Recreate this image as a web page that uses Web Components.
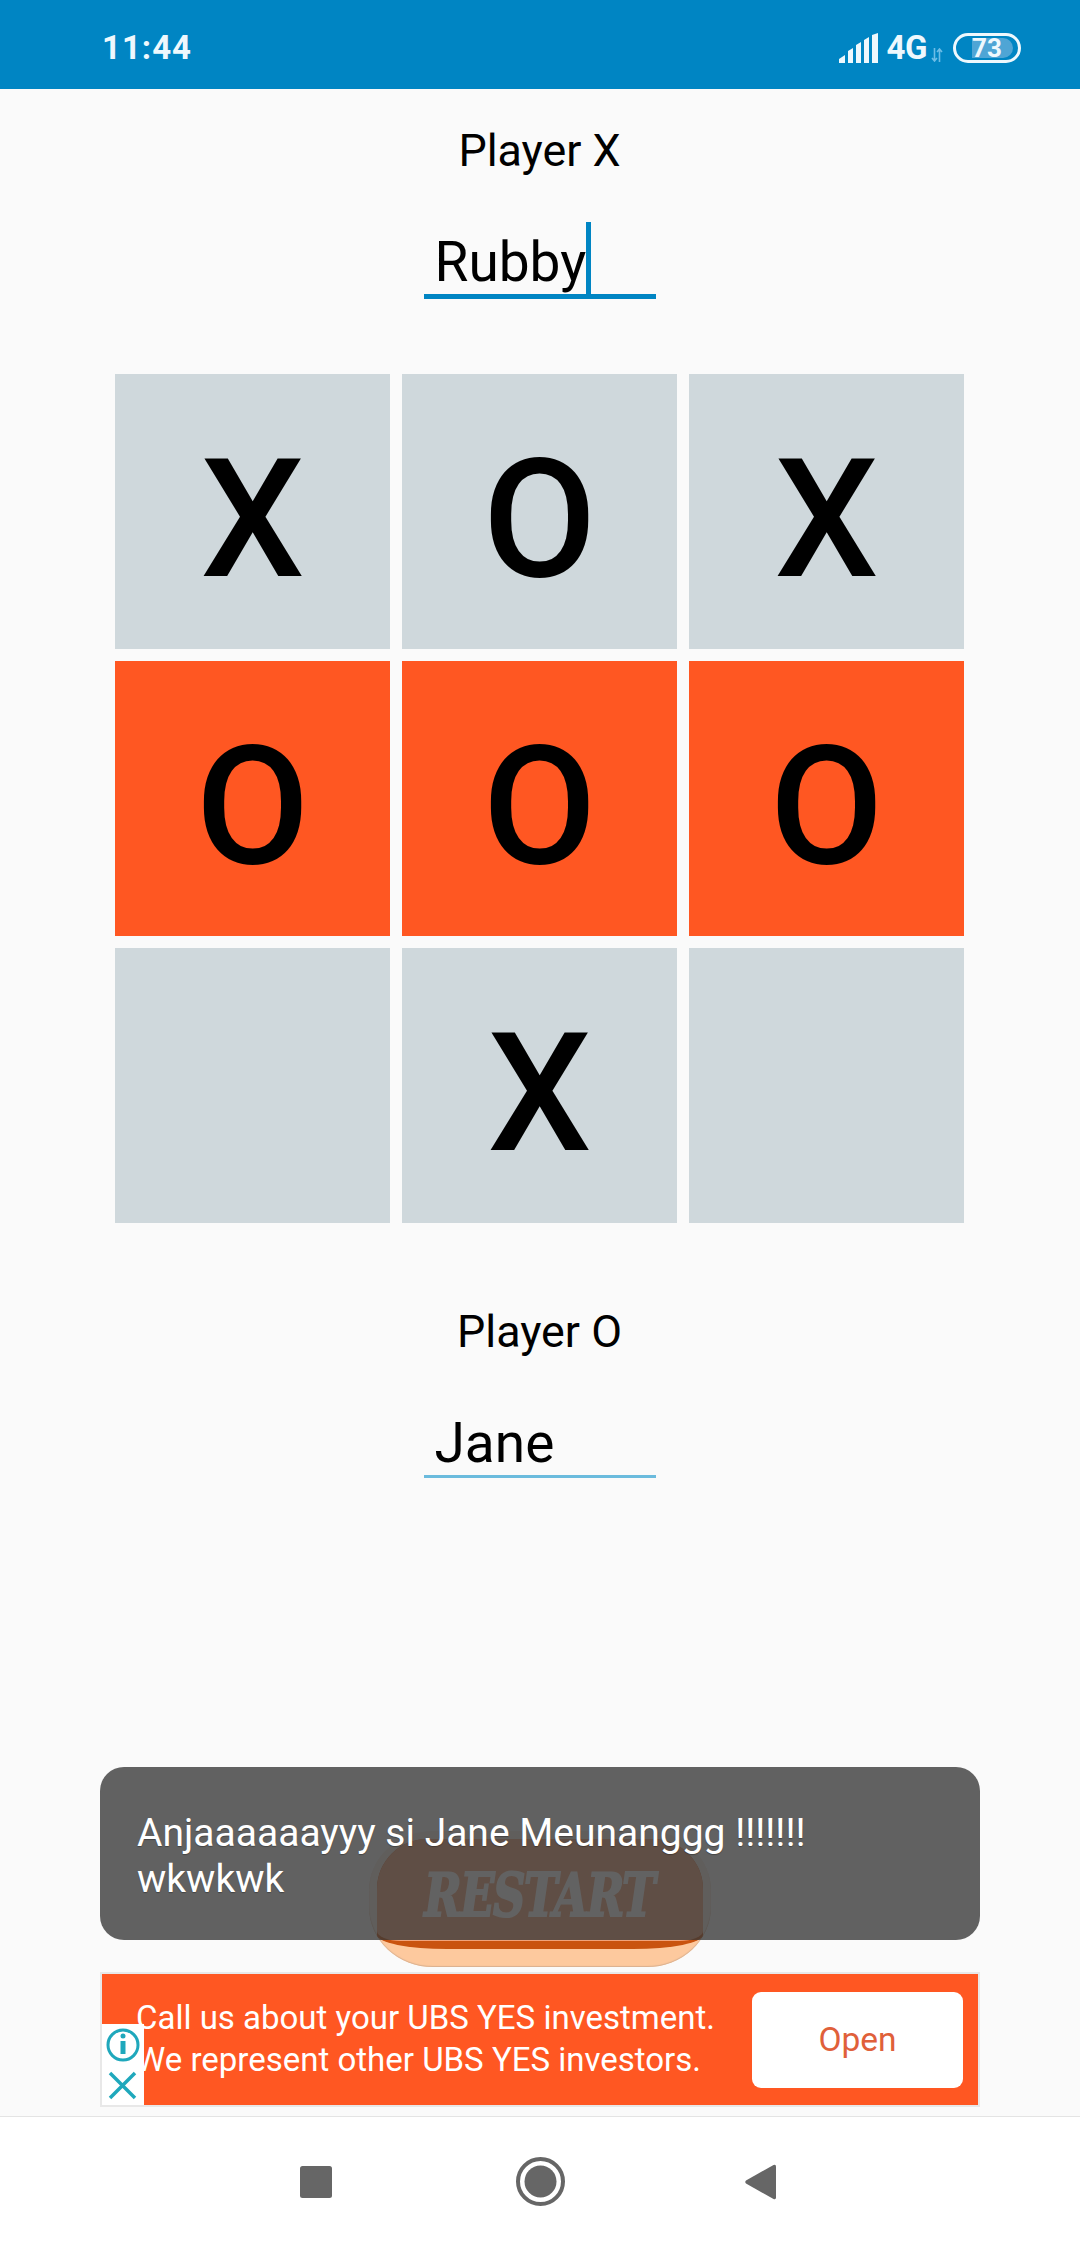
<!DOCTYPE html>
<html>
<head>
<meta charset="utf-8">
<title>Tic Tac Toe</title>
<style>
  html, body { margin: 0; padding: 0; }
  body { width: 1080px; height: 2246px; overflow: hidden; background: #fafafa; font-family: Roboto, sans-serif; }
  #app { display: flex; flex-direction: column; height: 2246px; position: relative; }
</style>
</head>
<body>
<div id="app">
  <status-bar time="11:44" level="73"></status-bar>
  <game-board></game-board>
  <ad-banner></ad-banner>
  <nav-bar></nav-bar>
  <toast-msg>Anjaaaaaayyy si Jane Meunanggg !!!!!!! wkwkwk</toast-msg>
</div>

<script>
/* === barra de estado === */
class StatusBar extends HTMLElement {
  constructor() {
    super();
    this.attachShadow({ mode: 'open' });
    const time = this.getAttribute('time');
    const level = this.getAttribute('level');
    this.shadowRoot.innerHTML = `
      <style>
        :host { display: flex; align-items: center; height: 89px; background: #0085c3; color: #fff; font-family: Roboto, sans-serif; flex: none; padding: 6px 59px 0 102px; box-sizing: border-box; }
        .time { font-size: 33px; font-weight: 700; letter-spacing: 1px; flex: 1; color: #eef8fd; }
        svg { display: block; }
        .arrows { margin-top: 15px; }
        .net { font-size: 33px; font-weight: 700; margin: 0 4px 0 8px; letter-spacing: -.5px; color: #eef8fd; }
        .bat { position: relative; width: 68px; height: 30px; margin-left: 10px; box-sizing: border-box; border: 3.5px solid #eef8fd; border-radius: 15px; }
        .fill { position: absolute; left: 16px; top: 2px; bottom: 2px; width: 41px; background: #4fa5d5; border-radius: 0 10px 10px 0; }
        .pct { position: absolute; left: 0; right: 0; top: -3px; text-align: center; font-size: 26px; line-height: 30px; font-weight: 700; color: #eef8fd; }
      </style>
      <span class="time">${time}</span>
      <svg width="40" height="30" viewBox="0 0 40 30" fill="#eef8fd">
        <path d="M0 30v-4l6-4v8zM9 30V18l5-3v15zM17 30V12l5-3v21zM25 30V7l5-3v26zM33 30V2l6-2v30z"/>
      </svg>
      <span class="net">4G</span>
      <svg class="arrows" width="12" height="14" viewBox="0 0 12 14" fill="none" stroke="#6dbde6" stroke-width="1.6">
        <path d="M3.5 0v13M1 10l2.500 3 2.500-3M8.500 14V1M6 4l2.500-3 2.500 3"/>
      </svg>
      <div class="bat"><div class="fill"></div><div class="pct">${level}</div></div>
    `;
  }
}

/* === casilla del tablero === */
class GameCell extends HTMLElement {
  constructor() {
    super();
    this.attachShadow({ mode: 'open' });
    this.shadowRoot.innerHTML = `
      <style>
        :host { display: flex; align-items: center; justify-content: center; width: 275px; height: 275px; background: #cfd8dc; font-family: Roboto, sans-serif; font-size: 165px; font-weight: 500; color: #000; line-height: 1; padding-top: 16px; box-sizing: border-box; }
        :host([win]) { background: #ff5722; }
      </style>
      <slot></slot>
    `;
  }
}

/* === campo de nombre === */
class PlayerField extends HTMLElement {
  constructor() {
    super();
    this.attachShadow({ mode: 'open' });
    this.shadowRoot.innerHTML = `
      <style>
        :host { display: flex; flex-direction: column; align-items: center; font-family: Roboto, sans-serif; color: #000; }
        .label { font-size: 44.800px; line-height: 52px; }
        .input { position: relative; box-sizing: border-box; width: 232px; height: 81px; margin-top: 39px; padding: 13px 0 0 11px; font-size: 55px; line-height: 66px; border-bottom: 3px solid #6bbbdd; }
        :host([focused]) .input { height: 83px; border-bottom: 5px solid #0085c3; }
        .caret { display: none; position: absolute; left: 162px; top: 6px; bottom: 0; width: 5px; background: #0085c3; }
        :host([focused]) .caret { display: block; }
      </style>
      <div class="label"><slot name="label"></slot></div>
      <div class="input"><slot></slot><span class="caret"></span></div>
    `;
  }
}

/* === pantalla de juego === */
class GameBoard extends HTMLElement {
  constructor() {
    super();
    this.attachShadow({ mode: 'open' });
    const marks = ['X', 'O', 'X', 'O', 'O', 'O', '', 'X', ''];
    const cells = marks.map((m, i) => `<game-cell ${i >= 3 && i <= 5 ? 'win' : ''}>${m}</game-cell>`).join('');
    this.shadowRoot.innerHTML = `
      <style>
        :host { display: flex; flex-direction: column; align-items: center; flex: 1; background: #fafafa; padding: 36px 1px 0 0; box-sizing: border-box; }
        .grid { display: grid; grid-template-columns: repeat(3, 275px); gap: 12px; margin: 75px 0 83px; }
        restart-button { margin-top: auto; }
      </style>
      <player-field focused><span slot="label">Player X</span>Rubby</player-field>
      <div class="grid">${cells}</div>
      <player-field><span slot="label">Player O</span>Jane</player-field>
      <restart-button></restart-button>
    `;
  }
}

/* === boton de reinicio (queda detras del toast) === */
class RestartButton extends HTMLElement {
  constructor() {
    super();
    this.attachShadow({ mode: 'open' });
    this.shadowRoot.innerHTML = `
      <style>
        :host { display: block; flex: none; width: 342px; height: 136px; margin-bottom: 5px; box-sizing: border-box; padding: 8px 8px 18px; background: linear-gradient(#f5ece5 79%, #fdc99e 81%); border-radius: 64px / 60px; box-shadow: inset 0 -1px 1px #d9b08f; }
        .edge { box-sizing: border-box; height: 100%; padding-bottom: 8px; background: #c9530f; border-radius: 50px 50px 70px 70px / 50px 50px 14px 14px; }
        .face { display: flex; align-items: center; justify-content: center; box-sizing: border-box; height: 100%; padding-top: 9px; background: #f1a47b; border-radius: 50px 50px 24px 24px / 50px 50px 10px 10px; font-family: "DejaVu Serif", serif; font-size: 60px; font-weight: 700; font-style: italic; color: #fff; overflow: hidden; }
        .face span { display: block; letter-spacing: -2px; -webkit-text-stroke: 2px #fff; transform: scaleX(.75); }
      </style>
      <div class="edge"><div class="face"><span>RESTART</span></div></div>
    `;
  }
}

/* === aviso flotante === */
class ToastMsg extends HTMLElement {
  constructor() {
    super();
    this.attachShadow({ mode: 'open' });
    this.shadowRoot.innerHTML = `
      <style>
        :host { position: absolute; left: 100px; top: 1767px; width: 880px; height: 173px; box-sizing: border-box; padding: 43px 37px 0; background: rgba(54, 54, 54, .78); border-radius: 24px; color: #fff; font-family: Roboto, sans-serif; font-size: 39px; line-height: 46px; text-shadow: 0 1px 1px rgba(0, 0, 0, .3); }
      </style>
      <slot></slot>
    `;
  }
}

/* === anuncio === */
class AdBanner extends HTMLElement {
  constructor() {
    super();
    this.attachShadow({ mode: 'open' });
    this.shadowRoot.innerHTML = `
      <style>
        :host { display: block; flex: none; margin: 0 100px 9px 100px; height: 135px; box-sizing: border-box; border: 2px solid #e8e8e8; background: #ff5722; position: relative; font-family: Roboto, sans-serif; }
        .row { display: flex; align-items: center; height: 100%; padding: 0 15px 0 34px; box-sizing: border-box; }
        .copy { flex: 1; margin-top: -2px; color: #fff; font-size: 33px; line-height: 42px; white-space: nowrap; }
        .open { display: flex; align-items: center; justify-content: center; width: 211px; height: 96px; background: #fff; border-radius: 9px; color: #e0603a; font-size: 33.500px; }
        .choice { position: absolute; left: 0; bottom: 0; width: 42px; height: 81px; background: #fff; }
        svg { display: block; }
      </style>
      <div class="row">
        <div class="copy">Call us about your UBS YES investment.<br>We represent other UBS YES investors.</div>
        <div class="open">Open</div>
      </div>
      <div class="choice">
        <svg width="42" height="81" viewBox="0 0 42 81" fill="none" stroke="#1fa8bc">
          <circle cx="21" cy="21" r="15" stroke-width="3"/>
          <circle cx="21" cy="12" r="2.500" fill="#1fa8bc" stroke="none"/>
          <path d="M21 17v13" stroke-width="5"/>
          <path d="M8 49l25 25M33 49L8 74" stroke-width="3.500"/>
        </svg>
      </div>
    `;
  }
}

/* === barra de navegacion === */
class NavBar extends HTMLElement {
  constructor() {
    super();
    this.attachShadow({ mode: 'open' });
    this.shadowRoot.innerHTML = `
      <style>
        :host { display: block; flex: none; height: 130px; background: #fff; border-top: 1px solid #e4e4e4; box-sizing: border-box; }
        .row { display: flex; align-items: center; height: 100%; padding-left: 300px; box-sizing: border-box; }
        .home { margin: 0 180px 0 184px; }
        svg { display: block; }
      </style>
      <div class="row">
        <svg width="32" height="32" viewBox="0 0 32 32"><rect width="32" height="32" rx="2.500" fill="#666"/></svg>
        <svg class="home" width="49" height="49" viewBox="0 0 49 49"><circle cx="24.500" cy="24.500" r="22.500" fill="none" stroke="#666" stroke-width="4"/><circle cx="24.500" cy="24.500" r="16" fill="#666"/></svg>
        <svg width="31" height="36" viewBox="0 0 31 36"><path d="M31 2.500V33.500Q31 36 28.500 35L1 19.500Q-.500 18 1 16.500L28.500 1Q31 0 31 2.500z" fill="#666"/></svg>
      </div>
    `;
  }
}

customElements.define('status-bar', StatusBar);
customElements.define('game-cell', GameCell);
customElements.define('player-field', PlayerField);
customElements.define('restart-button', RestartButton);
customElements.define('game-board', GameBoard);
customElements.define('toast-msg', ToastMsg);
customElements.define('ad-banner', AdBanner);
customElements.define('nav-bar', NavBar);
</script>
</body>
</html>
